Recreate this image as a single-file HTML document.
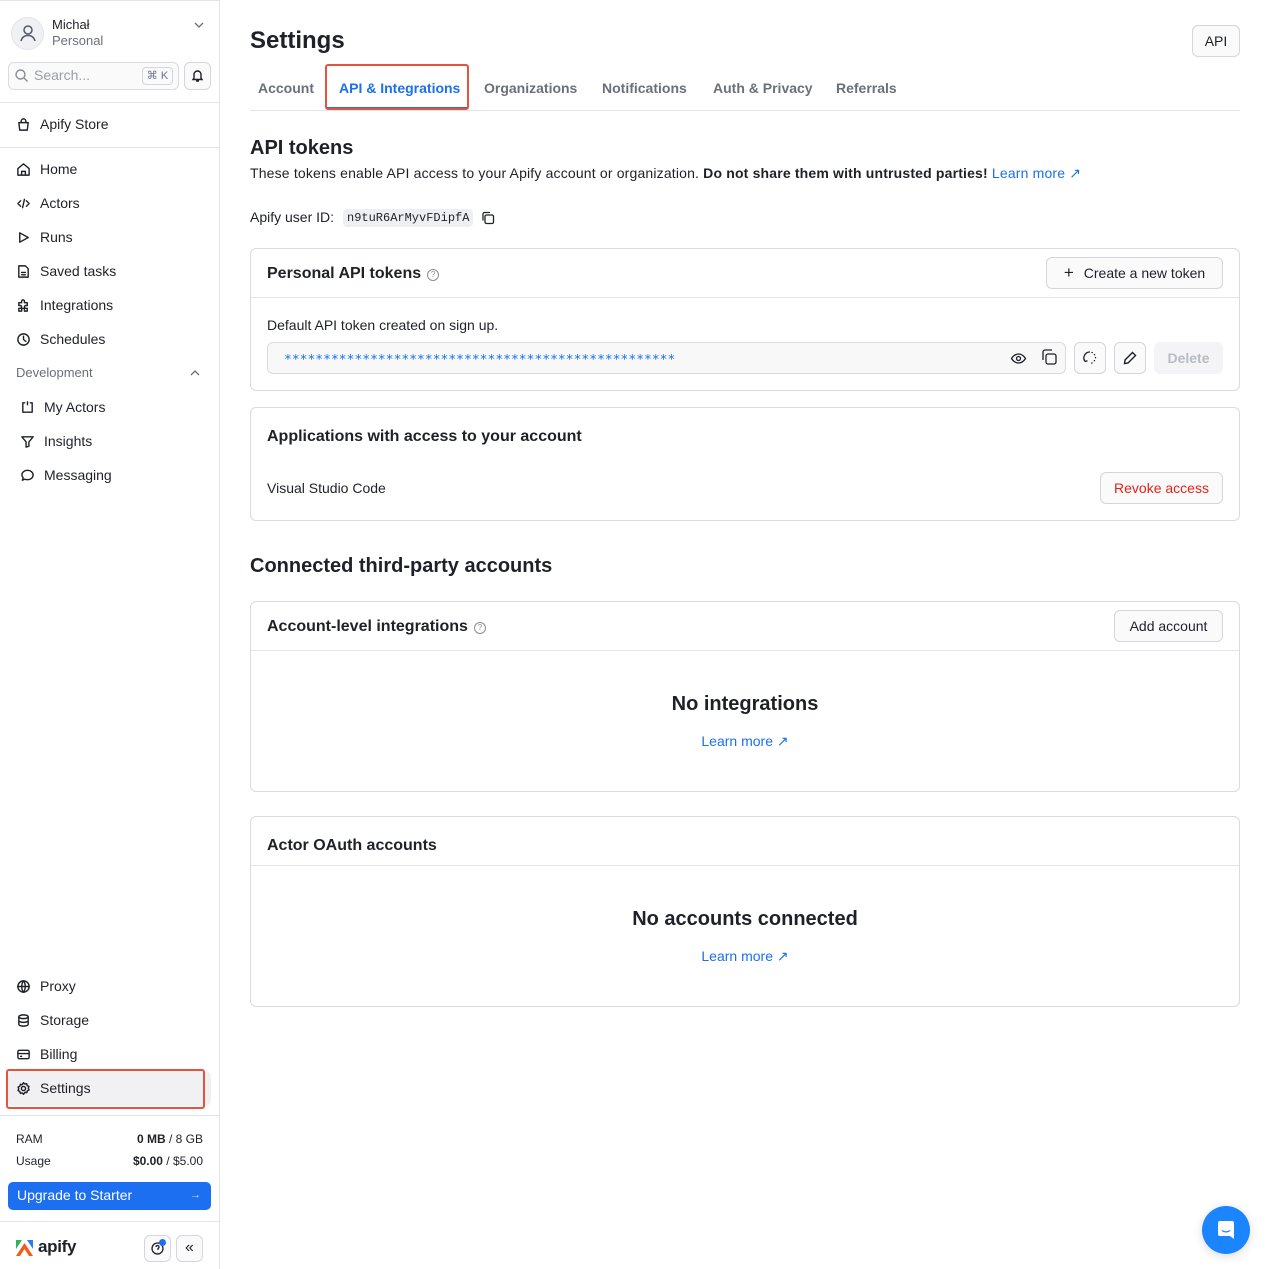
<!DOCTYPE html>
<html><head><meta charset="utf-8">
<style>
*{box-sizing:border-box;margin:0;padding:0}
body{width:1265px;height:1269px;overflow:hidden;background:#fff;font-family:"Liberation Sans",sans-serif;color:#1f2129;font-size:14px;position:relative}
.a{position:absolute;white-space:nowrap}
.sb{position:absolute;left:0;top:0;width:220px;height:1269px;border-right:1px solid #e3e4e8;border-top:1px solid #e3e4e8}
.hr{position:absolute;left:0;width:219px;height:1px;background:#e3e4e8}
.nav{position:absolute;left:16px;display:flex;align-items:center;gap:9px;font-size:14px;color:#1f2129}
.nav svg{width:15px;height:15px;stroke:#1f2129;fill:none;stroke-width:1.5;stroke-linecap:round;stroke-linejoin:round}
.btn{position:absolute;border:1px solid #d4d6db;border-radius:6px;background:#fafafa;display:flex;align-items:center;justify-content:center;font-size:14px;color:#1f2129}
.card{position:absolute;left:250px;width:990px;border:1px solid #d9dbe0;border-radius:6px}
.ch{position:absolute;left:0;right:0;height:1px;background:#e3e4e8}
.blue{color:#1b6ff0}
.q{display:inline-block;width:12px;height:12px;border:1px solid #8a8d96;border-radius:50%;font-size:8px;color:#8a8d96;text-align:center;line-height:10px;vertical-align:1px;margin-left:6px;font-weight:normal}
</style></head><body>
<div class="sb">
  <div class="a" style="left:11px;top:16px;width:33px;height:33px;border-radius:50%;background:#f0f1f5;border:1px solid #e3e4e8"></div>
  <svg class="a" style="left:18px;top:22px" width="20" height="20" viewBox="0 0 20 20" fill="none" stroke="#555a66" stroke-width="1.5"><circle cx="10" cy="7" r="4"/><path d="M3 18c1-4 4-5.5 7-5.5s6 1.5 7 5.5"/></svg>
  <div class="a" style="left:52px;top:16px;font-size:13px">Michał</div>
  <div class="a" style="left:52px;top:32px;font-size:13px;color:#6b6f7a">Personal</div>
  <svg class="a" style="left:193px;top:19px" width="12" height="10" viewBox="0 0 12 10" fill="none" stroke="#6b6f7a" stroke-width="1.3"><path d="M2 3l4 4 4-4"/></svg>
  <div class="a" style="left:8px;top:61px;width:171px;height:28px;border:1px solid #d9dbe0;border-radius:6px;background:#fafafa"></div>
  <svg class="a" style="left:14px;top:67px" width="15" height="15" viewBox="0 0 15 15" fill="none" stroke="#8a8d96" stroke-width="1.4"><circle cx="6.5" cy="6.5" r="4.5"/><path d="M10 10l3.5 3.5"/></svg>
  <div class="a" style="left:34px;top:66px;font-size:14px;color:#9a9ea8">Search...</div>
  <div class="a" style="left:142px;top:66px;width:31px;height:18px;border:1px solid #d4d6db;border-radius:4px;font-size:11px;color:#6b6f9a;text-align:center;line-height:16px">⌘ K</div>
  <div class="a" style="left:184px;top:61px;width:27px;height:28px;border:1px solid #d4d6db;border-radius:6px;background:#fafafa"></div>
  <svg class="a" style="left:190px;top:67px" width="15" height="15" viewBox="0 0 15 15" fill="none" stroke="#1f2129" stroke-width="1.4"><path d="M4 10V6.5a3.5 3.5 0 017 0V10l1 1.5H3z M6 13h3"/></svg>
  <div class="hr" style="top:101px"></div>
  <div class="nav" style="top:115px"><svg viewBox="0 0 16 16"><path d="M3 6h10l-1 8H4z M5.5 6V4.5a2.5 2.5 0 015 0V6"/></svg>Apify Store</div>
  <div class="hr" style="top:146px"></div>
  <div class="nav" style="top:160px"><svg viewBox="0 0 16 16"><path d="M2 7l6-5 6 5v7H2z M6 14v-4h4v4"/></svg>Home</div>
  <div class="nav" style="top:194px"><svg viewBox="0 0 16 16"><path d="M5 5L2 8l3 3 M11 5l3 3-3 3 M9 3.5l-2 9"/></svg>Actors</div>
  <div class="nav" style="top:228px"><svg viewBox="0 0 16 16"><path d="M4 3l9 5-9 5z"/></svg>Runs</div>
  <div class="nav" style="top:262px"><svg viewBox="0 0 16 16"><path d="M3 2h7l3 3v9H3z M6 9h4 M6 11.5h4"/></svg>Saved tasks</div>
  <div class="nav" style="top:296px"><svg viewBox="0 0 16 16"><path d="M3 5h3V3.5a1.5 1.5 0 013 0V5h3v3h-1.5a1.5 1.5 0 000 3H12v3H9v-1.5a1.5 1.5 0 00-3 0V14H3v-3h1.5a1.5 1.5 0 000-3H3z"/></svg>Integrations</div>
  <div class="nav" style="top:330px"><svg viewBox="0 0 16 16"><circle cx="8" cy="8" r="6"/><path d="M8 4.5V8l2.5 2"/></svg>Schedules</div>
  <div class="a" style="left:16px;top:364px;font-size:13px;color:#6b6f7a">Development</div>
  <svg class="a" style="left:189px;top:367px" width="12" height="10" viewBox="0 0 12 10" fill="none" stroke="#6b6f7a" stroke-width="1.3"><path d="M2 7l4-4 4 4"/></svg>
  <div class="nav" style="left:20px;top:398px"><svg viewBox="0 0 16 16"><path d="M5 3H3v10h10V3h-2 M8 2v3"/></svg>My Actors</div>
  <div class="nav" style="left:20px;top:432px"><svg viewBox="0 0 16 16"><path d="M2 3h12l-4.5 5.5V13l-3 1V8.5z"/></svg>Insights</div>
  <div class="nav" style="left:20px;top:466px"><svg viewBox="0 0 16 16"><path d="M8 2.5c3.3 0 6 2.2 6 5s-2.7 5-6 5c-1 0-2-.2-2.8-.6L2.5 13l.9-2.6C2.5 9.5 2 8.5 2 7.5c0-2.8 2.7-5 6-5z"/></svg>Messaging</div>
  <div class="nav" style="top:977px"><svg viewBox="0 0 16 16"><circle cx="8" cy="8" r="6"/><path d="M2 8h12 M8 2c-2.5 3-2.5 9 0 12 M8 2c2.5 3 2.5 9 0 12"/></svg>Proxy</div>
  <div class="nav" style="top:1011px"><svg viewBox="0 0 16 16"><ellipse cx="8" cy="4" rx="5" ry="2"/><path d="M3 4v8c0 1.1 2.2 2 5 2s5-.9 5-2V4 M3 8c0 1.1 2.2 2 5 2s5-.9 5-2"/></svg>Storage</div>
  <div class="nav" style="top:1045px"><svg viewBox="0 0 16 16"><rect x="2" y="3.5" width="12" height="9" rx="1.5"/><path d="M2 7h12 M5 10h1"/></svg>Billing</div>
  <div class="a" style="left:8px;top:1070px;width:203px;height:35px;background:#f1f1f3;border-radius:6px"></div>
  <div class="a" style="left:6px;top:1068px;width:199px;height:40px;border:2px solid #e5533c;border-radius:3px"></div>
  <div class="nav" style="top:1079px"><svg viewBox="0 0 16 16"><circle cx="8" cy="8" r="2.2"/><path d="M8 1.8l1.4 1.5 2-.4.5 2 1.9.9-.7 1.9.9 1.8-1.9.9-.5 2-2-.4L8 14.2l-1.4-1.5-2 .4-.5-2-1.9-.9.7-1.9-.7-1.8 1.9-.9.5-2 2 .4z"/></svg>Settings</div>
  <div class="hr" style="top:1114px"></div>
  <div class="a" style="left:16px;top:1131px;font-size:12px">RAM</div>
  <div class="a" style="right:16px;top:1131px;font-size:12px"><b>0 MB</b> / 8 GB</div>
  <div class="a" style="left:16px;top:1153px;font-size:12px">Usage</div>
  <div class="a" style="right:16px;top:1153px;font-size:12px"><b>$0.00</b> / $5.00</div>
  <div class="a" style="left:8px;top:1181px;width:203px;height:28px;background:#1b6ff0;border-radius:5px;color:#fff;font-size:14px;line-height:27px;padding-left:9px">Upgrade to Starter<span style="position:absolute;right:10px;font-size:11px;color:#cfe0ff">→</span></div>
  <div class="hr" style="top:1220px"></div>
  <svg class="a" style="left:16px;top:1239px" width="17" height="16" viewBox="0 0 17 16"><path d="M0 0h6L0 9z" fill="#2fb35a"/><path d="M11 0h6v9z" fill="#2a7cf6"/><path d="M0 16L8.5 3 17 16z" fill="#f45b16"/><path d="M4 16L8.5 9 13 16z" fill="#fff"/></svg>
  <div class="a" style="left:38px;top:1236px;font-size:17px;font-weight:bold;letter-spacing:-.3px">apify</div>
  <div class="a" style="left:144px;top:1234px;width:27px;height:27px;border:1px solid #d4d6db;border-radius:6px;background:#fafafa"></div>
  <svg class="a" style="left:150px;top:1240px" width="15" height="15" viewBox="0 0 15 15" fill="none" stroke="#1f2129" stroke-width="1.3"><circle cx="7.5" cy="7.5" r="5.5"/><path d="M6 6a1.5 1.5 0 112 1.4V9 M7.5 11v.3"/></svg>
  <div class="a" style="left:159px;top:1238px;width:7px;height:7px;border-radius:50%;background:#1b6ff0"></div>
  <div class="a" style="left:176px;top:1234px;width:27px;height:27px;border:1px solid #d4d6db;border-radius:6px;background:#fafafa;text-align:center;line-height:24px;font-size:16px">«</div>
</div>

<div class="a" style="left:250px;top:27px;font-size:24px;font-weight:bold">Settings</div>
<div class="btn" style="left:1192px;top:25px;width:48px;height:32px">API</div>
<div class="a" style="left:250px;top:110px;width:990px;height:1px;background:#e3e4e8"></div>
<div class="a" style="left:258px;top:80px;font-size:14px;font-weight:bold;color:#6b6f7a">Account</div>
<div class="a" style="left:325px;top:64px;width:144px;height:46px;border:2px solid #e5533c;border-radius:3px"></div>
<div class="a" style="left:339px;top:80px;font-size:14px;font-weight:bold" ><span class="blue">API &amp; Integrations</span></div>
<div class="a" style="left:327px;top:107px;width:140px;height:1px;background:#1b6ff0"></div>
<div class="a" style="left:484px;top:80px;font-size:14px;font-weight:bold;color:#6b6f7a">Organizations</div>
<div class="a" style="left:602px;top:80px;font-size:14px;font-weight:bold;color:#6b6f7a">Notifications</div>
<div class="a" style="left:713px;top:80px;font-size:14px;font-weight:bold;color:#6b6f7a">Auth &amp; Privacy</div>
<div class="a" style="left:836px;top:80px;font-size:14px;font-weight:bold;color:#6b6f7a">Referrals</div>

<div class="a" style="left:250px;top:137px;font-size:20px;font-weight:bold">API tokens</div>
<div class="a" style="left:250px;top:165px;font-size:14px;letter-spacing:.17px">These tokens enable API access to your Apify account or organization. <b>Do not share them with untrusted parties!</b> <span class="blue">Learn more ↗</span></div>
<div class="a" style="left:250px;top:209px;font-size:14px">Apify user ID:</div>
<div class="a" style="left:343px;top:209px;height:18px;padding:0 4px;background:#eeeff2;border-radius:4px;font-family:'Liberation Mono',monospace;font-size:12px;line-height:18px">n9tuR6ArMyvFDipfA</div>
<svg class="a" style="left:481px;top:211px" width="14" height="14" viewBox="0 0 14 14" fill="none" stroke="#1f2129" stroke-width="1.3"><rect x="4" y="4" width="8.5" height="8.5" rx="1.5"/><path d="M2 9.5V3a1.5 1.5 0 011.5-1.5H9"/></svg>

<div class="card" style="top:248px;height:143px">
  <div class="a" style="left:16px;top:16px;font-size:16px;font-weight:bold">Personal API tokens<span class="q">?</span></div>
  <div class="btn" style="left:795px;top:8px;width:177px;height:32px"><span style="font-size:17px;margin-right:10px">+</span>Create a new token</div>
  <div class="ch" style="top:48px"></div>
  <div class="a" style="left:16px;top:68px;font-size:14px">Default API token created on sign up.</div>
  <div class="a" style="left:16px;top:93px;width:799px;height:32px;border:1px solid #d9dbe0;border-radius:6px;background:#f8f8f9"></div>
  <div class="a blue" style="left:33px;top:101px;font-family:'DejaVu Sans Mono',monospace;font-size:13px;line-height:16px">∗∗∗∗∗∗∗∗∗∗∗∗∗∗∗∗∗∗∗∗∗∗∗∗∗∗∗∗∗∗∗∗∗∗∗∗∗∗∗∗∗∗∗∗∗∗∗∗∗∗</div>
  <svg class="a" style="left:759px;top:101px" width="17" height="17" viewBox="0 0 17 17" fill="none" stroke="#1f2129" stroke-width="1.3"><path d="M1.5 8.5s2.5-4.5 7-4.5 7 4.5 7 4.5-2.5 4.5-7 4.5-7-4.5-7-4.5z"/><circle cx="8.5" cy="8.5" r="2"/></svg>
  <svg class="a" style="left:789px;top:99px" width="18" height="18" viewBox="0 0 18 18" fill="none" stroke="#1f2129" stroke-width="1.3"><rect x="6" y="6" width="10" height="10" rx="2"/><path d="M3 12V4a2 2 0 012-2h7"/></svg>
  <div class="btn" style="left:823px;top:93px;width:32px;height:32px"><svg width="18" height="18" viewBox="0 0 18 18" fill="none" stroke="#1f2129" stroke-width="1.3"><path d="M9 3a6 6 0 00-5 9.5 M4 12.5L3 10 M4 12.5l2.5-.8" /><path d="M11 3.5l.3.1 M13.5 5.5l.1.3 M14.5 8.5v.3 M13.5 11.5l-.2.3 M11 14l-.3.1" stroke-linecap="round"/></svg></div>
  <div class="btn" style="left:863px;top:93px;width:32px;height:32px"><svg width="16" height="16" viewBox="0 0 16 16" fill="none" stroke="#1f2129" stroke-width="1.4"><path d="M10.5 2.5l3 3L6 13l-3.5.5L3 10z"/></svg></div>
  <div class="a" style="left:903px;top:93px;width:69px;height:32px;border-radius:6px;background:#f4f4f6;color:#b9bcc4;font-weight:bold;text-align:center;line-height:32px">Delete</div>
</div>

<div class="card" style="top:407px;height:114px">
  <div class="a" style="left:16px;top:20px;font-size:16px;font-weight:bold">Applications with access to your account</div>
  <div class="a" style="left:16px;top:72px;font-size:14px">Visual Studio Code</div>
  <div class="btn" style="left:849px;top:64px;width:123px;height:32px;color:#e3231b">Revoke access</div>
</div>

<div class="a" style="left:250px;top:555px;font-size:20px;font-weight:bold">Connected third-party accounts</div>

<div class="card" style="top:601px;height:191px">
  <div class="a" style="left:16px;top:16px;font-size:16px;font-weight:bold">Account-level integrations<span class="q">?</span></div>
  <div class="btn" style="left:863px;top:8px;width:109px;height:32px">Add account</div>
  <div class="ch" style="top:48px"></div>
  <div class="a" style="left:0;width:988px;text-align:center;top:91px;font-size:20px;font-weight:bold">No integrations</div>
  <div class="a blue" style="left:0;width:988px;text-align:center;top:131px;font-size:14px">Learn more ↗</div>
</div>

<div class="card" style="top:816px;height:191px">
  <div class="a" style="left:16px;top:20px;font-size:16px;font-weight:bold">Actor OAuth accounts</div>
  <div class="ch" style="top:48px"></div>
  <div class="a" style="left:0;width:988px;text-align:center;top:91px;font-size:20px;font-weight:bold">No accounts connected</div>
  <div class="a blue" style="left:0;width:988px;text-align:center;top:131px;font-size:14px">Learn more ↗</div>
</div>

<div class="a" style="left:1202px;top:1206px;width:48px;height:48px;border-radius:50%;background:#1b84ff;box-shadow:0 2px 10px rgba(0,0,0,.15)"></div>
<svg class="a" style="left:1215px;top:1219px" width="22" height="22" viewBox="0 0 22 22"><path d="M3 4a2 2 0 012-2h12a2 2 0 012 2v16l-4-3H5a2 2 0 01-2-2z" fill="#fff"/><path d="M7 11.5c2.5 1.8 5.5 1.8 8 0" stroke="#1b84ff" stroke-width="1.3" fill="none"/></svg>
</body></html>
